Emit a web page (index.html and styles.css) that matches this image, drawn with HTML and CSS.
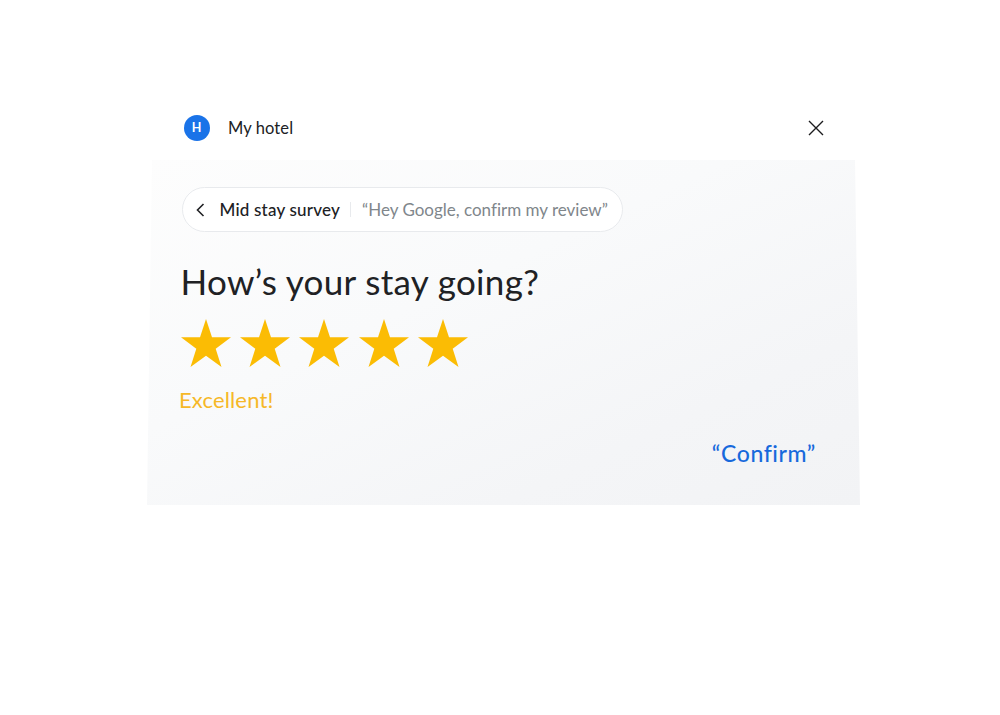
FILE: index.html
```html
<!DOCTYPE html>
<html lang="en">
<head>
    <meta charset="UTF-8">
    <meta name="viewport" content="width=device-width, initial-scale=1.0">
    <title>My hotel</title>
    <link rel="stylesheet" href="styles.css">
</head>
<body>
    <div class="display">
        <header class="top-bar">
            <span class="avatar">H</span>
            <span class="hotel-name">My hotel</span>
            <svg class="close" width="16" height="16" viewBox="0 0 16 16">
                <path d="M1 1L15 15M15 1L1 15" fill="none" stroke="#1c1c1e" stroke-width="1.4"/>
            </svg>
        </header>

        <main class="panel">
            <div class="pill">
                <svg class="back" width="9" height="14" viewBox="0 0 9 14">
                    <path d="M7.5 1L1.5 7L7.5 13" fill="none" stroke="#202124" stroke-width="1.6"/>
                </svg>
                <span class="pill-title">Mid stay survey</span>
                <span class="pill-hint">“Hey Google, confirm my review”</span>
            </div>

            <h1>How’s your stay going?</h1>

            <div class="stars">
                <svg class="star" viewBox="0 0 50 48"><path d="M25 0L31 18.3H50L34.7 29.7L40.5 48L25 36.8L9.5 48L15.3 29.7L0 18.3H19Z"/></svg>
                <svg class="star" viewBox="0 0 50 48"><path d="M25 0L31 18.3H50L34.7 29.7L40.5 48L25 36.8L9.5 48L15.3 29.7L0 18.3H19Z"/></svg>
                <svg class="star" viewBox="0 0 50 48"><path d="M25 0L31 18.3H50L34.7 29.7L40.5 48L25 36.8L9.5 48L15.3 29.7L0 18.3H19Z"/></svg>
                <svg class="star" viewBox="0 0 50 48"><path d="M25 0L31 18.3H50L34.7 29.7L40.5 48L25 36.8L9.5 48L15.3 29.7L0 18.3H19Z"/></svg>
                <svg class="star" viewBox="0 0 50 48"><path d="M25 0L31 18.3H50L34.7 29.7L40.5 48L25 36.8L9.5 48L15.3 29.7L0 18.3H19Z"/></svg>
            </div>

            <p class="rating">Excellent!</p>
            <p class="confirm">“Confirm”</p>
        </main>
    </div>
</body>
</html>
```
FILE: styles.css
```css
* {
    margin: 0;
    padding: 0;
    box-sizing: border-box;
}

body {
    background: #ffffff;
    color: #202124;
    font-family: Lato, "Open Sans", sans-serif;
}

.display {
    width: 713px;
    margin-left: 147px;
    padding-top: 96px;
}

/* Top bar */
.top-bar {
    display: flex;
    align-items: center;
    height: 64px;
    padding: 0 36px 0 36.5px;
}

.avatar {
    width: 26px;
    height: 26px;
    border-radius: 50%;
    background: #1a73e8;
    color: #ffffff;
    font-size: 12.5px;
    font-weight: 700;
    line-height: 26px;
    text-align: center;
}

.hotel-name {
    margin-left: 18.5px;
    font-size: 16.5px;
    line-height: 24px;
    letter-spacing: 0.1px;
}

.close {
    margin-left: auto;
}

/* Panel, slightly wider at the bottom */
.panel {
    display: flex;
    flex-direction: column;
    align-items: flex-start;
    height: 345px;
    padding: 27px 44px 0 35px;
    background: linear-gradient(155deg, #fdfdfd 0%, #f9fafb 40%, #f4f5f7 75%, #f2f3f5 100%);
    clip-path: polygon(5px 0, 708px 0, 100% 100%, 0 100%);
}

.pill {
    display: flex;
    align-items: center;
    width: 441px;
    height: 45px;
    padding-left: 13px;
    border: 1px solid #e8eaed;
    border-radius: 23px;
    background: #ffffff;
    font-size: 17px;
    line-height: 22px;
    white-space: nowrap;
    font-variant-ligatures: none;
}

.pill-title {
    margin-left: 14.5px;
    width: 131.5px;
    border-right: 1px solid #e8eaed;
    font-weight: 500;
    line-height: 15px;
    letter-spacing: 0.2px;
}

.pill-hint {
    margin-left: 11px;
    color: #80868b;
}

h1 {
    margin: 27px 0 0 -1.5px;
    font-size: 35px;
    font-weight: 400;
    line-height: 44px;
    letter-spacing: 0.33px;
    white-space: nowrap;
}

.stars {
    display: flex;
    gap: 9.4px;
    margin: 16px 0 0 -1.3px;
}

.star {
    width: 50px;
    height: 48px;
    fill: #fbbc04;
}

.rating {
    margin: 19px 0 0 -3px;
    color: #f6b828;
    font-size: 22px;
    line-height: 28px;
    letter-spacing: 0.15px;
}

.confirm {
    align-self: flex-end;
    margin-top: 25px;
    color: #1769dc;
    font-size: 23px;
    font-weight: 500;
    line-height: 28px;
    letter-spacing: 0.6px;
}
```
